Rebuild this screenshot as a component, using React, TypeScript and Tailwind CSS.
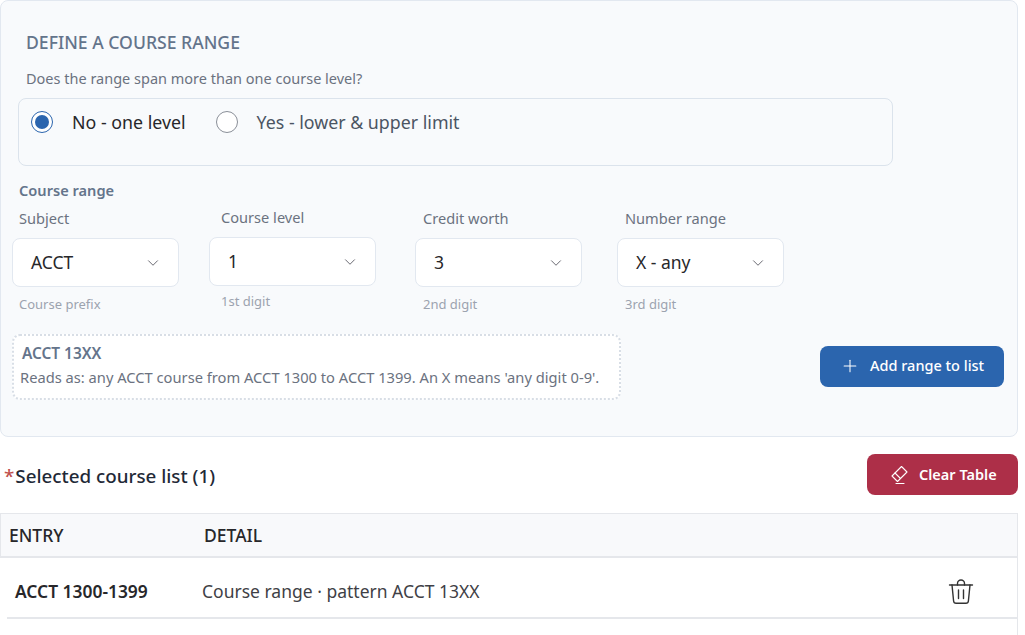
import { ChevronDown, Plus } from "lucide-react";

const fields = [
  { label: "Subject", value: "ACCT", hint: "Course prefix", offset: "ml-[-7px]", labelTop: "", hintTop: "mt-[8px]" },
  { label: "Course level", value: "1", hint: "1st digit", offset: "ml-[-12px]", labelTop: "mt-[-1px]", hintTop: "mt-[6px]" },
  { label: "Credit worth", value: "3", hint: "2nd digit", offset: "ml-[-8px]", labelTop: "", hintTop: "mt-[8px]" },
  { label: "Number range", value: "X - any", hint: "3rd digit", offset: "ml-[-8px]", labelTop: "", hintTop: "mt-[8px]" },
];

function TrashIcon() {
  return (
    <svg width="26" height="26" viewBox="0 0 26 26" fill="none" stroke="#333" strokeWidth="1.4" strokeLinecap="round" strokeLinejoin="round">
      <path d="M1.5 6h23" />
      <path d="M9.5 6V4.5a3.5 3.5 0 0 1 7 0V6" />
      <path d="M4 6l1.6 16a2.5 2.5 0 0 0 2.5 2.3h9.8a2.5 2.5 0 0 0 2.5-2.3L22 6" />
      <path d="M10.5 11v8.5M15.5 11v8.5" />
    </svg>
  );
}

function EraserIcon() {
  return (
    <svg width="20" height="20" viewBox="0 0 20 20" fill="none" stroke="currentColor" strokeWidth="1.1" strokeLinejoin="round" strokeLinecap="round">
      <path d="M12.5 1.5 18 7l-9.5 9.5L3 11z" />
      <path d="m6 8 5.5 5.5" />
      <path d="M7 18.5h8" />
    </svg>
  );
}

function Radio({ checked, label }: { checked?: boolean; label: string }) {
  return (
    <label className="flex items-center">
      <span className={`flex size-[22px] items-center justify-center rounded-full border bg-white ${checked ? "border-[#2b65ae]" : "border-[#8a8f98]"}`}>
        {checked && <span className="size-[14px] rounded-full bg-[#2b65ae]" />}
      </span>
      <span className={`ml-[19px] text-[17.8px] ${checked ? "text-[#27272a]" : "text-[#4b5563]"}`}>{label}</span>
    </label>
  );
}

export default function App() {
  return (
    <div className="h-[635px] w-[1025px] overflow-hidden bg-white font-['Noto_Sans','Open_Sans',sans-serif]">
      <div className="w-[1018px]">
        <section className="h-[437px] rounded-lg border border-[#e2e8f0] bg-[#f8fafc] pl-[10px] pt-[30px]">
          <h2 className="ml-[15px] text-[17.6px] font-medium leading-[22px] text-[#64748b]">DEFINE A COURSE RANGE</h2>
          <p className="ml-[15px] mt-[15px] text-[14.5px] leading-[20px] text-[#6b7280]">Does the range span more than one course level?</p>
          <div className="ml-[7px] mt-[10px] flex h-[68px] w-[875px] items-start gap-[30px] rounded-lg border border-[#dbe3ec] px-[12px] pt-[10px]">
            <Radio checked label="No - one level" />
            <Radio label="Yes - lower & upper limit" />
          </div>
          <h3 className="ml-[8px] mt-[14px] text-[14.6px] font-semibold leading-[20px] text-[#64748b]">Course range</h3>
          <div className="ml-[8px] mt-[8px] flex">
            {fields.map((f) => (
              <div key={f.label} className="w-[202px]">
                <div className={`text-[14.6px] leading-[20px] text-[#6b7280] ${f.labelTop}`}>{f.label}</div>
                <div className={`mt-[10px] flex h-[49px] w-[167px] items-center justify-between rounded-lg border border-[#e2e8f0] bg-white pl-[18px] pr-[16px] text-[17.5px] text-[#27272a] ${f.offset}`}>
                  {f.value}
                  <ChevronDown size={18} strokeWidth={1.15} className="text-[#52525b]" />
                </div>
                <div className={`text-[13px] leading-[18px] text-[#9ca3af] ${f.hintTop}`}>{f.hint}</div>
              </div>
            ))}
          </div>
          <div className="mt-[21px] flex items-center">
            <div className="ml-px h-[66px] w-[609px] rounded-lg border-2 border-dotted border-[#d8dee6] bg-white pl-[8px] pt-[8px]">
              <div className="text-[15.4px] font-semibold leading-[20px] text-[#64748b]">ACCT 13XX</div>
              <div className="ml-[-2px] mt-[3px] text-[14.7px] leading-[20px] text-[#6b7280]">Reads as: any ACCT course from ACCT 1300 to ACCT 1399. An X means 'any digit 0-9'.</div>
            </div>
            <button type="button" className="mb-[2px] ml-[199px] flex h-[41px] w-[184px] items-center rounded-lg bg-[#2b65ae] pl-[20px] text-[14.5px] font-medium text-white">
              <Plus size={20} strokeWidth={1.25} />
              <span className="ml-[10px]">Add range to list</span>
            </button>
          </div>
        </section>

        <div className="mt-[17px] flex h-[41px] items-center justify-between">
          <h3 className="ml-[4px] flex pt-[3px] text-[18.8px] font-medium text-[#1f2937]">
            <span className="mr-[1px] text-[#c0504d]">*</span>Selected course list (1)
          </h3>
          <button type="button" className="flex h-[41px] w-[151px] items-center rounded-lg bg-[#ad2f48] pl-[22px] text-[14.5px] font-semibold text-white">
            <EraserIcon />
            <span className="ml-[10px]">Clear Table</span>
          </button>
        </div>

        <div className="mt-[18px] h-[200px] border-r border-[#e5e7eb]">
          <div className="flex h-[45px] items-center border-x-0 border-b-2 border-l border-t border-[#e5e7eb] bg-[#f8f9fb] text-[17.5px] font-medium text-[#27272a]">
            <span className="ml-[8px] w-[195px]">ENTRY</span>
            <span>DETAIL</span>
          </div>
          <div className="ml-[7px] flex h-[61px] items-center border-b-2 border-[#e5e7eb] pt-[8px] text-[#3f3f46]">
            <span className="ml-[8px] w-[187px] text-[17.4px] font-semibold text-[#27272a]">ACCT 1300-1399</span>
            <span className="text-[17.5px]">Course range · pattern ACCT 13XX</span>
            <span className="ml-auto mr-[43px]"><TrashIcon /></span>
          </div>
        </div>
      </div>
    </div>
  );
}
